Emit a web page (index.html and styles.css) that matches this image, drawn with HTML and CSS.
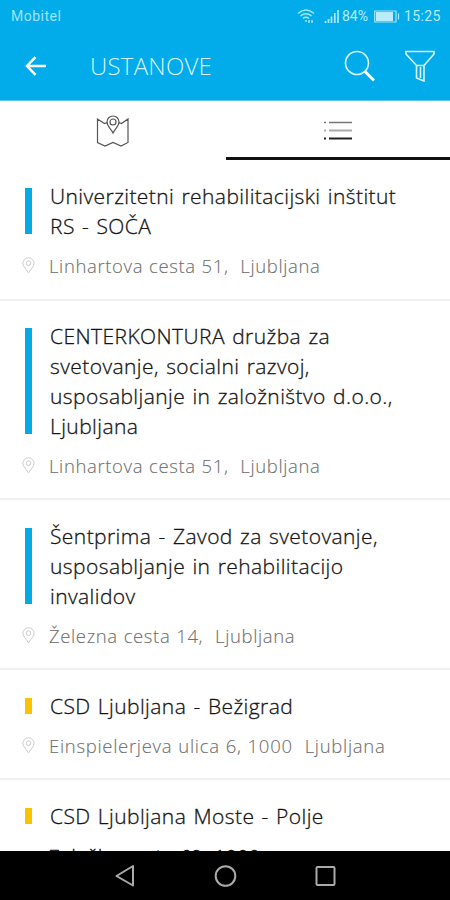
FILE: index.html
```html
<!DOCTYPE html>
<html lang="sl">
<head>
<meta charset="utf-8">
<title>Ustanove</title>
<link rel="stylesheet" href="styles.css">
</head>
<body>
<svg class="defs" width="0" height="0"><symbol id="pin" viewBox="0 0 14 18"><path d="M7 17C5 12.8 1 10.500 1 6.700A6 6 0 0 1 13 6.700C13 10.500 9 12.800 7 17Z"/><circle cx="7" cy="6.500" r="2.500"/></symbol></svg>
<div class="phone">
  <header class="top">
    <div class="status">
      <span class="carrier">Mobitel</span>
      <svg class="wifi" width="18" height="16" viewBox="0 0 18 16"><path d="M1 5.500Q9-1.500 17 5.500M3.500 8Q9 3.500 14.500 8M6 10.500Q9 8 12 10.500"/><path d="M8 13h2M12 12v3M15 12v3"/></svg>
      <svg class="signal" width="16" height="15" viewBox="0 0 16 15"><path d="M1.500 14v-2M4.500 14v-4M7.500 14V7.500M10.800 14V4M14 14V1"/></svg>
      <span class="percent">84%</span>
      <svg class="battery" width="27" height="13" viewBox="0 0 27 13"><path class="outline" d="M.7 1H22V12H.7ZM24.500 3.500v6"/><path class="charge" d="M2 2H19V11H2Z"/></svg>
      <span class="clock">15:25</span>
    </div>
    <div class="toolbar">
      <svg class="back" width="22" height="20" viewBox="0 0 22 20"><path d="M10.500 1.200L2 10l8.500 8.800M2.500 10H21"/></svg>
      <h1>USTANOVE</h1>
      <svg class="search" width="32" height="32" viewBox="0 0 32 32"><circle cx="13" cy="13" r="11.500"/><path class="handle" d="M21 21.500L30 30.500"/></svg>
      <svg class="filter" width="30" height="32" viewBox="0 0 30 32"><path d="M1 1.500H29V4L19 15.500V31L11.500 28V15.500L1 4ZM11.500 15.500H19M15.500 17V28"/></svg>
    </div>
  </header>
  <nav class="tabs">
    <div class="tab"><svg width="34" height="34" viewBox="0 0 34 34"><path d="M11 8.500L8.500 9.500L1.500 5V28.500L9 32L17 28.500L25 32L32 28.500V5L25.500 9.500L23 8.500M17 19C15 14.500 11 12 11 8A6 6 0 0 1 23 8C23 12 19 14.500 17 19Z"/><circle cx="17" cy="8" r="3"/></svg></div>
    <div class="tab active"><svg width="30" height="20" viewBox="0 0 30 20"><path class="l1" d="M1 2.500h2M6 2.500H29"/><path class="l2" d="M1 10.500h2M6 10.500H29"/><path class="l3" d="M1 18.500h2M6 18.500H29"/></svg></div>
  </nav>
  <main class="list">
    <article class="row">
      <i class="bar"></i><h2>Univerzitetni rehabilitacijski inštitut<br>RS - SOČA</h2>
      <svg class="pin"><use href="#pin"/></svg><p>Linhartova cesta 51,&nbsp; Ljubljana</p>
    </article>
    <article class="row">
      <i class="bar"></i><h2>CENTERKONTURA družba za<br>svetovanje, socialni razvoj,<br>usposabljanje in založništvo d.o.o.,<br>Ljubljana</h2>
      <svg class="pin"><use href="#pin"/></svg><p>Linhartova cesta 51,&nbsp; Ljubljana</p>
    </article>
    <article class="row">
      <i class="bar"></i><h2>Šentprima - Zavod za svetovanje,<br>usposabljanje in rehabilitacijo<br>invalidov</h2>
      <svg class="pin"><use href="#pin"/></svg><p>Železna cesta 14,&nbsp; Ljubljana</p>
    </article>
    <article class="row yellow">
      <i class="bar"></i><h2>CSD Ljubljana - Bežigrad</h2>
      <svg class="pin"><use href="#pin"/></svg><p class="wide">Einspielerjeva ulica 6, 1000&nbsp; Ljubljana</p>
    </article>
    <article class="row yellow last">
      <i class="bar"></i><h2>CSD Ljubljana Moste - Polje</h2>
      <p>Zaloška cesta 69, 1000</p>
    </article>
  </main>
  <footer class="navbar">
    <svg width="22" height="24" viewBox="0 0 22 24"><path d="M20 2V21.500L3.500 12Z"/></svg>
    <svg width="24" height="24" viewBox="0 0 24 24"><circle cx="12.500" cy="12" r="9.800"/></svg>
    <svg width="22" height="24" viewBox="0 0 22 24"><rect x="1.500" y="3" width="18" height="18" rx="1"/></svg>
  </footer>
</div>
</body>
</html>
```
FILE: styles.css
```css
* { box-sizing: border-box; }
body { margin: 0; font-family: "Open Sans", "Noto Sans", sans-serif; background: #fff; }
h1, h2, p { margin: 0; font-weight: 400; white-space: nowrap; }
svg { display: block; fill: none; flex: none; }
.defs { display: none; }
.phone { display: flex; flex-direction: column; width: 450px; height: 900px; overflow: hidden; }
.top { height: 101px; flex: none; background: #02abea; border-bottom: 1px solid #5cc3e6; color: #b9ecfb; }
.status { display: flex; align-items: center; height: 32px; padding-left: 11px; font: 14px/32px Roboto, sans-serif; stroke: #a5e6fa; }
.status span { stroke: none; }
.carrier { width: 286px; letter-spacing: .5px; color: #9de3fa; }
.wifi { stroke-width: 1.5; }
.signal { margin-left: 9px; stroke-width: 1.8; }
.percent { width: 31px; margin-left: 2px; }
.battery { margin-left: 1px; }
.battery .outline { stroke-width: 1.200; }
.battery .charge { fill: #b9ecfb; stroke: none; }
.clock { margin-left: 3px; letter-spacing: .35px; }
.toolbar { display: flex; align-items: center; height: 68px; padding-left: 25px; stroke: #d8f5ff; }
.back { stroke: #fff; stroke-width: 2.500; }
h1 { width: 254px; margin-left: 43px; font-size: 24px; font-weight: 300; letter-spacing: .25px; line-height: 68px; stroke: none; color: #d8f5ff; }
.search { stroke-width: 1.600; }
.search .handle { stroke-width: 2.800; stroke: #fff; }
.filter { margin-left: 29px; stroke-width: 1.600; }
.tabs { display: flex; height: 59px; flex: none; }
.tab { display: flex; justify-content: center; align-items: center; width: 226px; stroke: #555; stroke-width: 1.200; }
.tab.active { width: 224px; border-bottom: 3px solid #111; padding-top: 2px; }
.l1 { stroke: #777; stroke-width: 1.600; }
.l2 { stroke: #aaa; stroke-width: 2; }
.l3 { stroke: #222; stroke-width: 1.800; }
.list { flex: 1; min-height: 0; overflow: hidden; }
.row { display: grid; grid-template-columns: 25px 1fr; padding: 22px 0 18px 25px; border-bottom: 2px solid #f0f0f0; row-gap: 10px; }
.row:first-child { padding-bottom: 19px; }
.row:nth-child(2) { padding-top: 21px; }
.bar { margin: 6px 0 8px; width: 7px; background: #06a9e2; }
.yellow .bar { background: #f8c300; }
h2 { margin-top: -1px; margin-bottom: 1px; font-size: 21px; line-height: 30px; color: #151515; font-weight: 300; letter-spacing: .42px; word-spacing: 1.4px; -webkit-text-stroke: .3px #151515; }
p { font-size: 18.500px; line-height: 28px; height: 28px; color: #707070; font-weight: 300; margin-left: -1px; letter-spacing: .62px; word-spacing: .5px; -webkit-text-stroke: .12px #707070; }
.wide { letter-spacing: .7px; }
.pin { width: 13px; height: 17px; margin: 5px 0 0 -3px; stroke: #c8c8c8; }
.last p { grid-column: 2; letter-spacing: 1px; color: #111; -webkit-text-stroke: .4px #111; }
.navbar { display: flex; align-items: center; justify-content: center; gap: 78px; height: 49px; flex: none; background: #000; stroke: #aaa; stroke-width: 2; stroke-linejoin: round; }
```
